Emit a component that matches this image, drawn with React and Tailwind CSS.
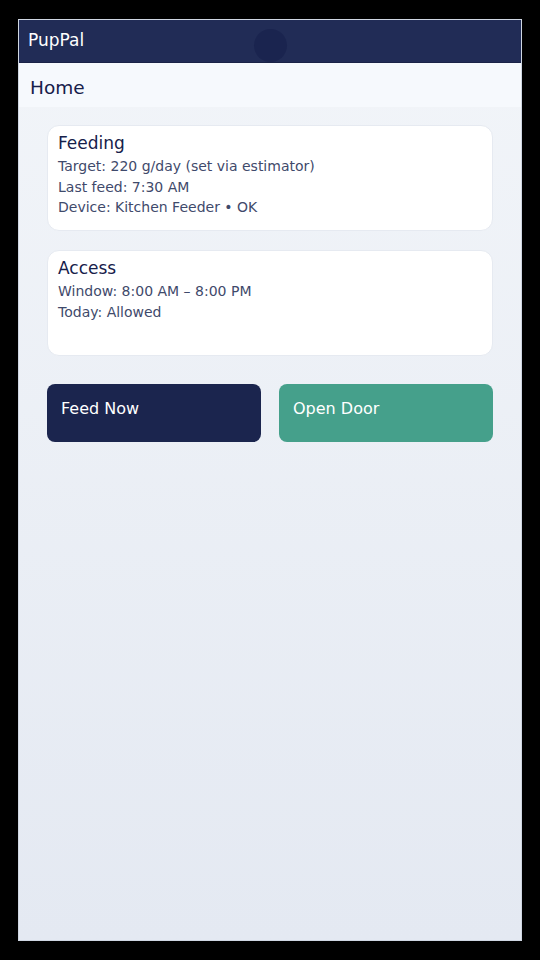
export default function App() {
  return (
    <div className="w-[540px] h-[960px] bg-black pt-[19px] px-[18px] pb-[19px] font-['DejaVu_Sans',sans-serif]">
      <div className="w-[504px] h-[922px] flex flex-col bg-gradient-to-b from-[#f2f5f9] to-[#e4e9f2] border border-[#cfd6e2] overflow-hidden">
        {/* Top bar */}
        <div className="relative h-[43px] shrink-0 bg-[#212c56] border-b border-[#1a2347] flex items-center px-[9px]">
          <span className="text-white text-[17px]">PupPal</span>
          <div className="absolute left-[235px] top-[9px] w-[33px] h-[33px] rounded-full bg-[#1a244f]" />
        </div>

        {/* Page title */}
        <div className="h-[44px] shrink-0 bg-[#f6f9fd] flex items-center px-[11px] pt-[5px]">
          <h1 className="text-[18.5px] text-[#16204a]">Home</h1>
        </div>

        {/* Content */}
        <div className="flex flex-col px-[28px] pt-[18px]">
          <div className="h-[106px] bg-white rounded-xl border border-[#e6eaf1] px-[10px] pt-[5px]">
            <h2 className="text-[17px] leading-[25px] text-[#16204a]">Feeding</h2>
            <div className="text-[14px] leading-[20.5px] text-[#3f4a6b]">
              <p>Target: 220 g/day (set via estimator)</p>
              <p>Last feed: 7:30 AM</p>
              <p>Device: Kitchen Feeder • OK</p>
            </div>
          </div>

          <div className="mt-[19px] h-[106px] bg-white rounded-xl border border-[#e6eaf1] px-[10px] pt-[5px]">
            <h2 className="text-[17px] leading-[25px] text-[#16204a]">Access</h2>
            <div className="text-[14px] leading-[20.5px] text-[#3f4a6b]">
              <p>Window: 8:00 AM – 8:00 PM</p>
              <p>Today: Allowed</p>
            </div>
          </div>

          <div className="mt-[28px] flex gap-[18px]">
            <button className="flex-1 h-[58px] rounded-lg bg-[#1b254e] text-white text-[16px] text-left px-[14px] pb-[8px]">
              Feed Now
            </button>
            <button className="flex-1 h-[58px] rounded-lg bg-[#45a08b] text-white text-[16px] text-left px-[14px] pb-[8px]">
              Open Door
            </button>
          </div>
        </div>
      </div>
    </div>
  )
}
